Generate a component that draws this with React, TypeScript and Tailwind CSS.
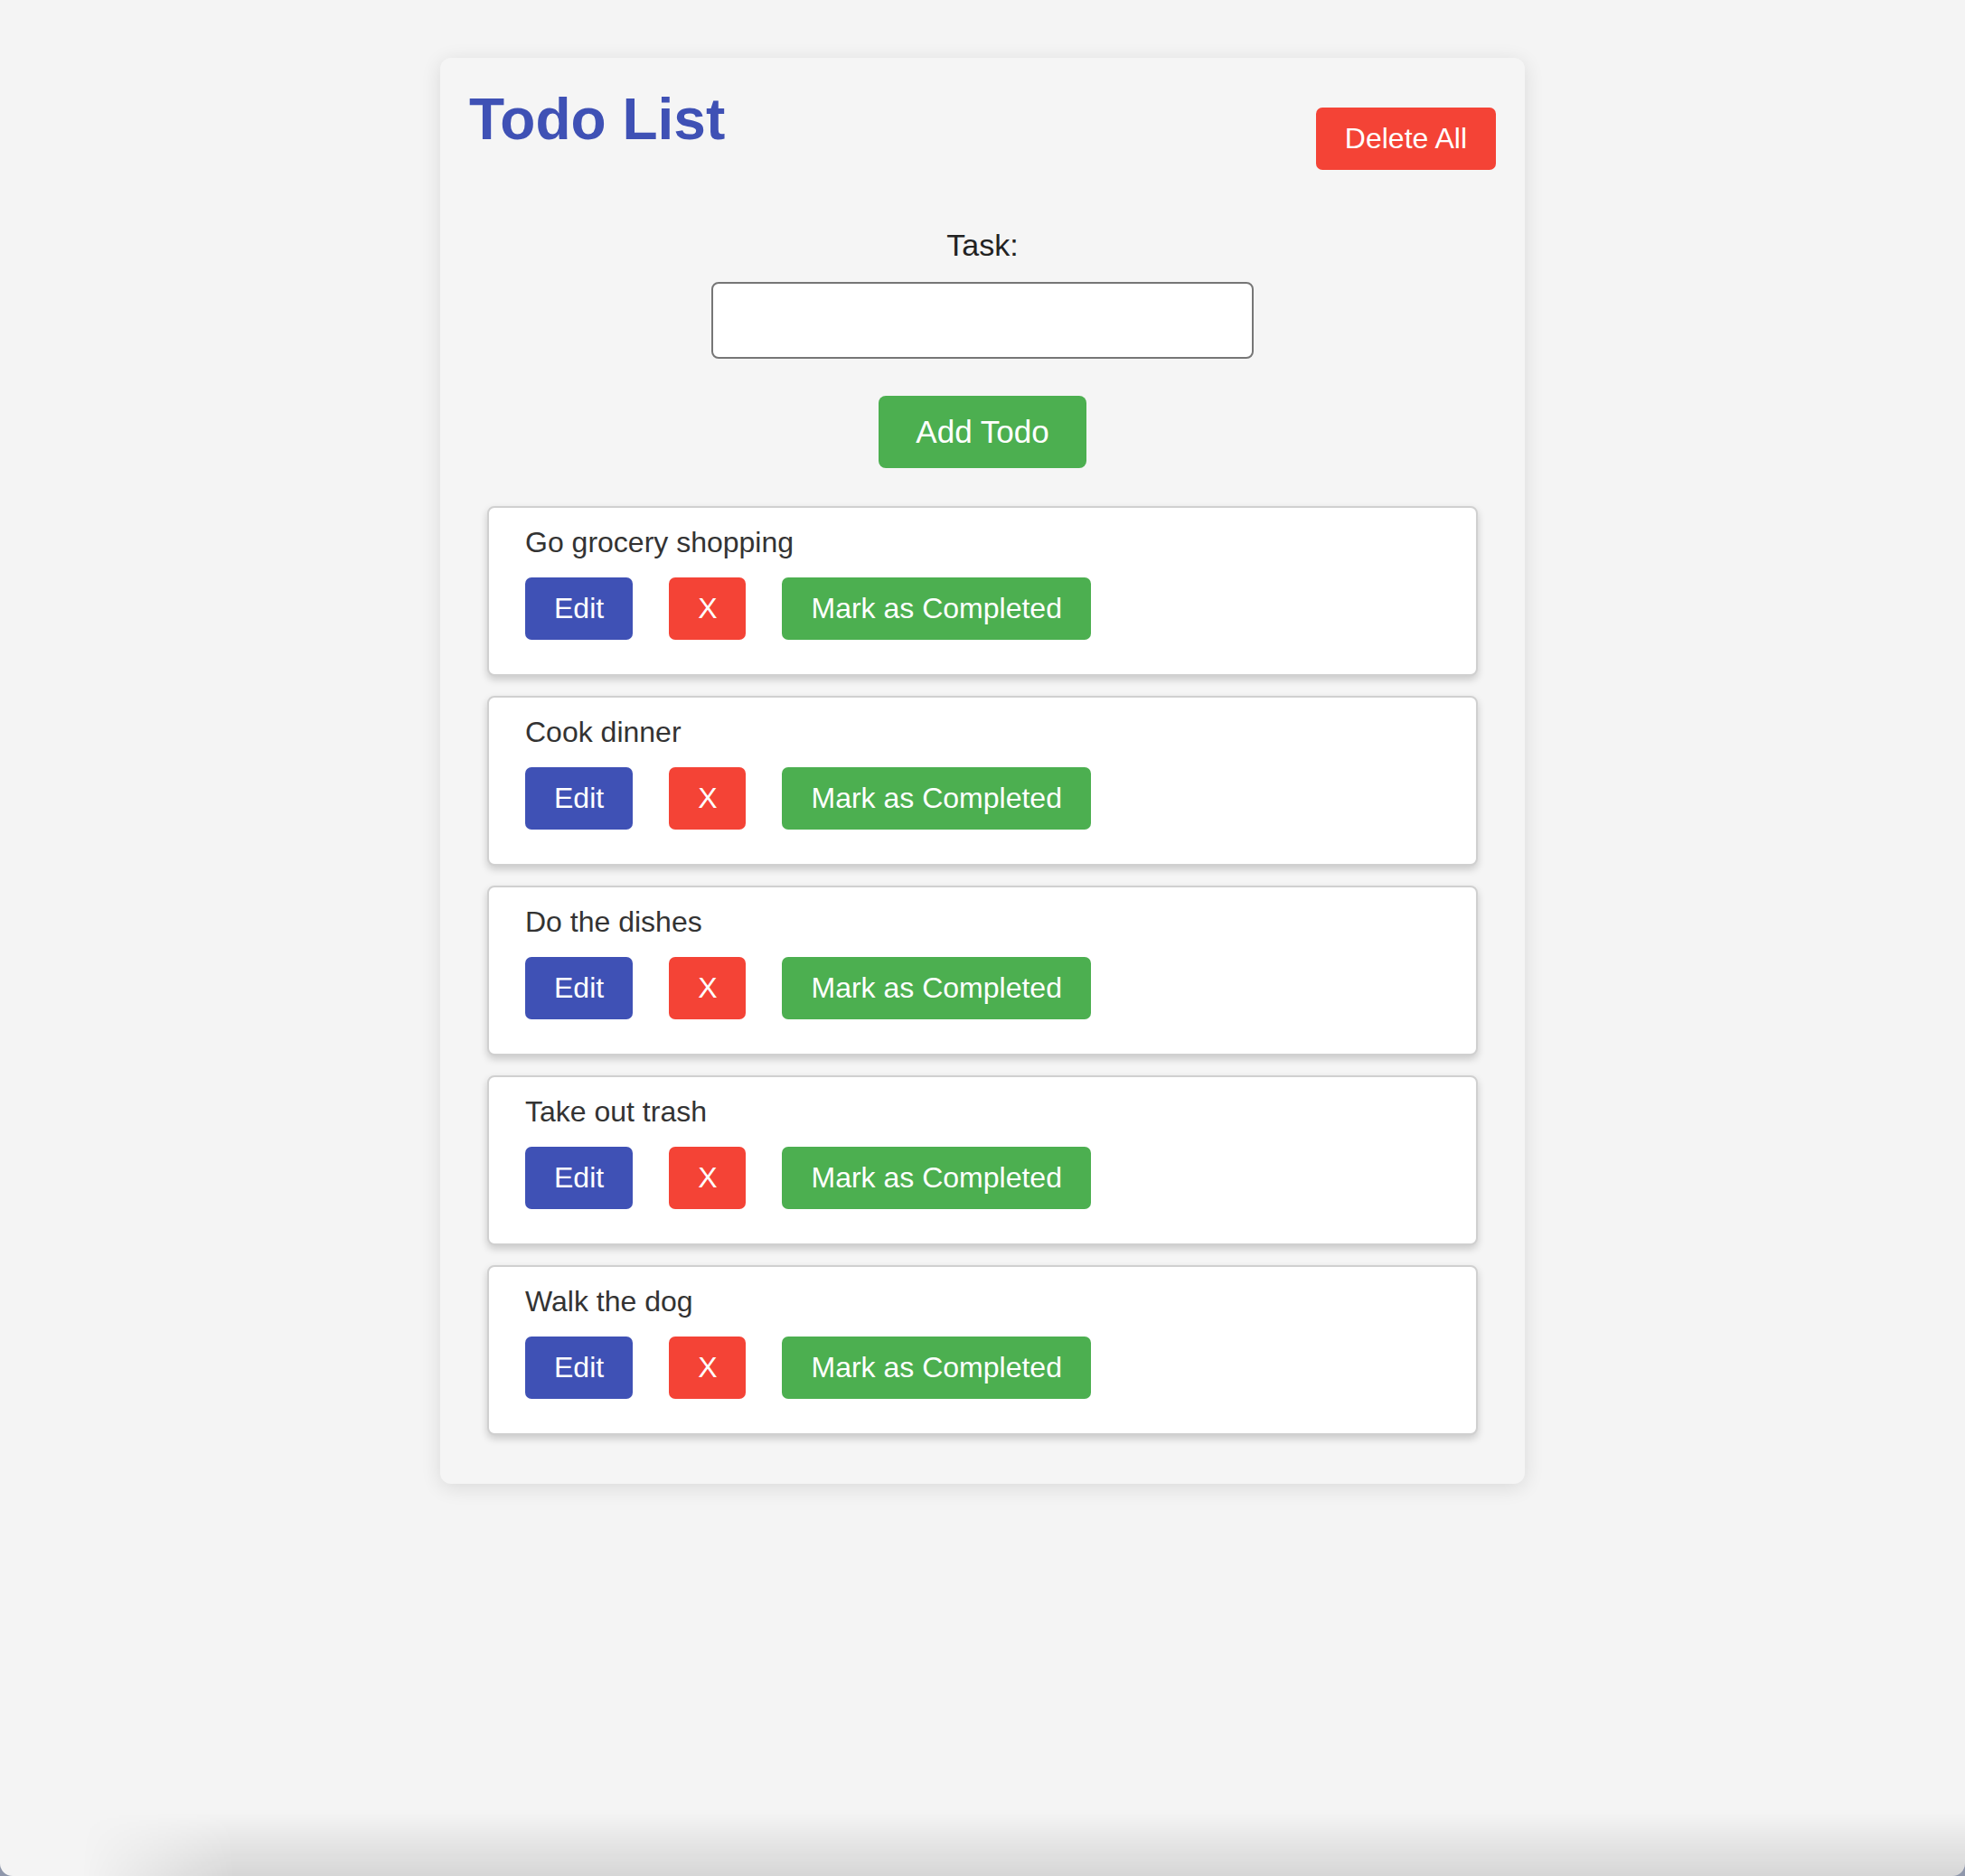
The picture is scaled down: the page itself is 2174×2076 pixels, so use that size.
import React, { useState } from 'react';

interface Todo {
  id: number;
  text: string;
  completed: boolean;
}

const initialTodos: Todo[] = [
  { id: 1, text: 'Go grocery shopping', completed: false },
  { id: 2, text: 'Cook dinner', completed: false },
  { id: 3, text: 'Do the dishes', completed: false },
  { id: 4, text: 'Take out trash', completed: false },
  { id: 5, text: 'Walk the dog', completed: false },
];

function TodoItem({ todo, onDelete, onToggle }: { todo: Todo; onDelete: () => void; onToggle: () => void }) {
  return (
    <li className="bg-white border-2 border-[#d0d0d0] rounded-[8px] shadow-[0_4px_8px_rgba(0,0,0,0.18)] pt-[20px] px-[40px] pb-[38px]">
      <span className={`block text-[32px] leading-[37px] text-[#333] ${todo.completed ? 'line-through' : ''}`}>
        {todo.text}
      </span>
      <div className="flex gap-[40px] mt-[20px]">
        <button className="bg-[#3f51b5] text-white text-[32px] leading-[37px] px-[32px] py-[16px] rounded-[7px]">
          Edit
        </button>
        <button
          onClick={onDelete}
          className="bg-[#f44336] text-white text-[32px] leading-[37px] px-[32px] py-[16px] rounded-[7px]"
        >
          X
        </button>
        <button
          onClick={onToggle}
          className="bg-[#4caf50] text-white text-[32px] leading-[37px] px-[32px] py-[16px] rounded-[7px]"
        >
          Mark as Completed
        </button>
      </div>
    </li>
  );
}

export default function App() {
  const [todos, setTodos] = useState<Todo[]>(initialTodos);
  const [task, setTask] = useState('');

  const addTodo = () => {
    if (!task.trim()) return;
    setTodos([...todos, { id: Date.now(), text: task.trim(), completed: false }]);
    setTask('');
  };

  return (
    <div className="h-[2076px] flex flex-col bg-[#8f97ab] font-['Liberation_Sans',Arial,sans-serif]">
      <div className="flex-1 flex flex-col bg-[#f4f4f4] rounded-b-[14px] overflow-hidden">
        <div className="pt-[64px] flex justify-center">
          <div className="w-[1200px] bg-[#f5f5f5] rounded-[12px] shadow-[0_4px_22px_rgba(0,0,0,0.11)] p-[32px]">
            {/* header */}
            <div className="flex justify-between items-start">
              <h1 className="text-[64px] leading-[1.15] font-bold text-[#3f51b5]">Todo List</h1>
              <button
                onClick={() => setTodos([])}
                className="mt-[23px] bg-[#f44336] text-white text-[32px] leading-[37px] px-[32px] py-[16px] rounded-[7px]"
              >
                Delete All
              </button>
            </div>

            {/* form */}
            <div className="mt-[64px] flex flex-col items-center">
              <label className="text-[34px] leading-[39px] text-[#222]">Task:</label>
              <input
                value={task}
                onChange={(e) => setTask(e.target.value)}
                className="mt-[21px] w-[600px] h-[85px] bg-white border-2 border-[#767676] rounded-[8px] px-4 text-[32px] outline-none"
              />
              <button
                onClick={addTodo}
                className="mt-[41px] bg-[#4caf50] text-white text-[35px] leading-[40px] px-[41px] py-[20px] rounded-[8px]"
              >
                Add Todo
              </button>
            </div>

            {/* list */}
            <ul className="flex flex-col gap-[22px] px-[20px] pt-[42px] pb-[22px]">
              {todos.map((t) => (
                <TodoItem
                  key={t.id}
                  todo={t}
                  onDelete={() => setTodos(todos.filter((x) => x.id !== t.id))}
                  onToggle={() =>
                    setTodos(todos.map((x) => (x.id === t.id ? { ...x, completed: !x.completed } : x)))
                  }
                />
              ))}
            </ul>
          </div>
        </div>

        {/* window bottom shade */}
        <div className="mt-auto h-[70px] bg-[linear-gradient(to_bottom,rgba(0,0,0,0),rgba(0,0,0,0.12))] [mask-image:linear-gradient(to_right,transparent_90px,black_260px)]" />
      </div>
    </div>
  );
}
